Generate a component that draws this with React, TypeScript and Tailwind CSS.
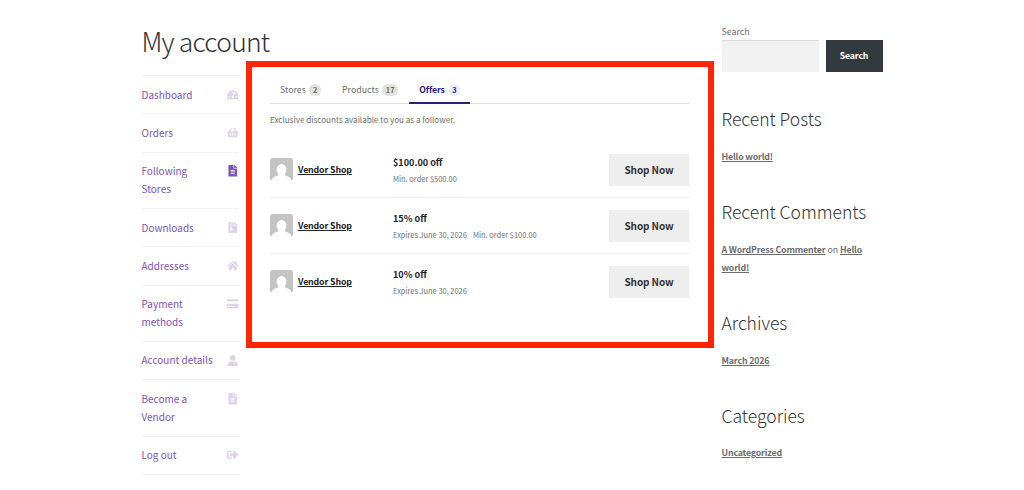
import {
    FaCreditCard,
    FaFileAlt,
    FaFileArchive,
    FaHome,
    FaShoppingBasket,
    FaSignOutAlt,
    FaTachometerAlt,
    FaUser,
} from "react-icons/fa";

const navItems = [
    { label: "Dashboard", icon: FaTachometerAlt },
    { label: "Orders", icon: FaShoppingBasket },
    { label: "Following Stores", icon: FaFileAlt, active: true },
    { label: "Downloads", icon: FaFileArchive },
    { label: "Addresses", icon: FaHome },
    { label: "Payment methods", icon: FaCreditCard },
    { label: "Account details", icon: FaUser },
    { label: "Become a Vendor", icon: FaFileAlt },
    { label: "Log out", icon: FaSignOutAlt },
];

const tabs = [
    { label: "Stores", count: 2 },
    { label: "Products", count: 17 },
    { label: "Offers", count: 3, active: true },
];

const offers = [
    { title: "$100.00 off", details: ["Min. order $500.00"] },
    { title: "15% off", details: ["Expires June 30, 2026", "Min. order $100.00"] },
    { title: "10% off", details: ["Expires June 30, 2026"] },
];

function Avatar() {
    return (
        <svg viewBox="0 0 23 23" className="size-[23px] shrink-0 rounded-[3px]">
            <path d="M0 0h23v23h-1.200c-.5-3-3.200-5-6.600-5.600h-7.400c-3.400.6-6.100 2.600-6.600 5.600H0z" fill="#c4c4c4" />
            <ellipse cx="11.5" cy="11.800" rx="4.900" ry="5.700" fill="#fff" />
            <path d="M8 15.500h7v3H8z" fill="#fff" />
        </svg>
    );
}

function AccountNav() {
    return (
        <ul className="w-[97px] border-t border-[#f3f3f3]">
            {navItems.map(({ label, icon: Icon, active }) => (
                <li key={label} className="flex justify-between border-b border-[#f3f3f3] py-[9.6px] text-[10px] leading-[18.1px] text-[#7f54b3]">
                    <a href="#" className={label === "Account details" ? "whitespace-nowrap" : "w-[64px]"}>{label}</a>
                    <span className="flex h-[18px] w-[14px] items-center justify-end">
                        <Icon className={active ? "h-[11.5px] w-auto shrink-0" : "h-[11.5px] w-auto shrink-0 opacity-25"} />
                    </span>
                </li>
            ))}
        </ul>
    );
}

function Offers() {
    return (
        <section className="h-[287px] w-[468px] border-6 border-[#ff2600] pt-[8px] pr-[19px] pl-[18px]">
            <div className="flex h-[29px] border-b border-[#e3e3dc]">
                {tabs.map(({ label, count, active }) => (
                    <button
                        key={label}
                        className={
                            active
                                ? "flex h-[29px] items-center gap-1 border-b-2 border-[#2c1c80] px-[10px] pt-[2px] text-[8.7px] font-bold tracking-[-0.1px] text-[#2c1c80]"
                                : "flex h-[29px] items-center gap-[3.5px] border-b-2 border-transparent pt-[2px] pr-[11.2px] pl-[10px] text-[8.8px] text-[#6d6d6d]"
                        }
                    >
                        {label}
                        <span
                            className={
                                active
                                    ? "rounded-full bg-[#e8edfd] px-[3.4px] text-[7.3px] leading-[12px] font-bold"
                                    : "rounded-full bg-[#e3e2db] px-[3.6px] text-[7.3px] leading-[12px] font-bold"
                            }
                        >
                            {count}
                        </span>
                    </button>
                ))}
            </div>
            <p className="mt-[8px] text-[8.1px] leading-[16px] text-[#6d6d6d]">Exclusive discounts available to you as a follower.</p>
            <ul className="mt-[14.5px]">
                {offers.map(({ title, details }) => (
                    <li key={title} className="flex h-[55.7px] items-center border-b border-[#ececec] last:border-0">
                        <div className="flex w-[123px] items-center gap-[5px]">
                            <Avatar />
                            <a href="#" className="text-[8.8px] font-bold tracking-[-0.14px] text-[#1d2327] underline">Vendor Shop</a>
                        </div>
                        <div className="flex-1 pt-[1.6px]">
                            <h3 className="text-[9.1px] leading-[17px] font-bold text-[#1d2327]">{title}</h3>
                            <p className="flex gap-[6px] text-[7.45px] leading-[16.6px] text-[#6d7175]">
                                {details.map((detail) => (
                                    <span key={detail}>{detail}</span>
                                ))}
                            </p>
                        </div>
                        <button className="h-[32px] w-[80px] bg-[#eeeeee] pb-[1px] text-[10px] font-bold tracking-[-0.1px] text-[#333333]">Shop Now</button>
                    </li>
                ))}
            </ul>
        </section>
    );
}

function Sidebar() {
    const heading = "text-[17.5px] leading-[24px] font-light text-[#333333]";
    const link = "font-bold tracking-[-0.17px] underline";

    return (
        <aside className="w-[161px] pt-[24px] text-[8.8px] leading-[17.7px] text-[#6d6d6d]">
            <label className="block h-[16px] leading-[16.5px]">Search</label>
            <div className="flex justify-between">
                <input className="h-[32px] w-[97.5px] border-t border-[#dddddd] bg-[#f2f2f2]" />
                <button className="h-[32px] w-[57px] bg-[#333a3f] font-bold tracking-[-0.17px] text-white">Search</button>
            </div>
            <h2 className={`mt-[35.4px] ${heading}`}>Recent Posts</h2>
            <p className="mt-[16.6px]"><a href="#" className={link}>Hello world!</a></p>
            <h2 className={`mt-[34.6px] ${heading}`}>Recent Comments</h2>
            <p className="mt-[16.6px]">
                <a href="#" className={link}>A WordPress Commenter</a> on <a href="#" className={link}>Hello world!</a>
            </p>
            <h2 className={`mt-[34.9px] ${heading}`}>Archives</h2>
            <p className="mt-[16.6px]"><a href="#" className={link}>March 2026</a></p>
            <h2 className={`mt-[34.4px] ${heading}`}>Categories</h2>
            <p className="mt-[16.2px]"><a href="#" className={link}>Uncategorized</a></p>
        </aside>
    );
}

export default function App() {
    return (
        <div className="flex h-[490px] w-[1024px] overflow-hidden bg-white pl-[141.5px] font-['Noto_Sans_CJK_SC','Noto_Sans',sans-serif]">
            <div className="mr-[7.5px] w-[572.5px]">
                <h1 className="h-[61px] pt-[22px] text-[26.5px] leading-[37px] font-light tracking-[-0.8px] text-[#333333]">My account</h1>
                <div className="flex justify-between">
                    <div className="pt-[14px]">
                        <AccountNav />
                    </div>
                    <Offers />
                </div>
            </div>
            <Sidebar />
        </div>
    );
}
